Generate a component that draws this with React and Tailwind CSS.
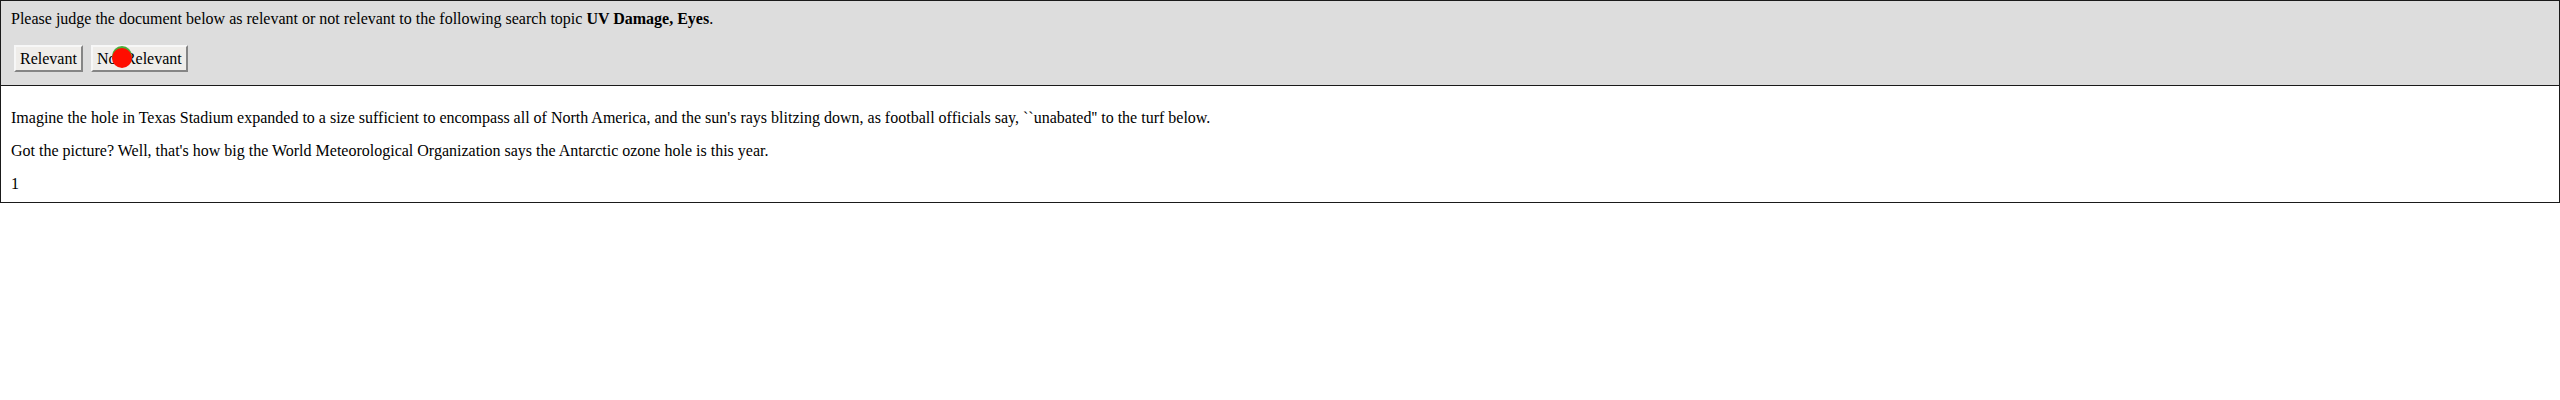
import React from "react";

export default function App() {
  return (
    <div className="w-[2560px] h-[400px] bg-white text-black" style={{ fontFamily: '"Liberation Serif", "Times New Roman", serif' }}>
      <div className="relative border border-[#1a1a1a] bg-[#dddddd] h-[86px] px-[10px] pt-[9px] text-[16px] leading-[18px]">
        <div>
          Please judge the document below as relevant or not relevant to the following search topic <b>UV Damage, Eyes</b>.
        </div>
        <div className="flex gap-[8px] mt-[17px] ml-[3px]">
          <button className="h-[27px] px-[4px] bg-[#efedea] border-2 border-t-[#f7f7f7] border-l-[#f7f7f7] border-r-[#858585] border-b-[#858585] text-[16px] leading-[18px]">
            Relevant
          </button>
          <button className="h-[27px] px-[4px] bg-[#efedea] border-2 border-t-[#f7f7f7] border-l-[#f7f7f7] border-r-[#858585] border-b-[#858585] text-[16px] leading-[18px]">
            Not Relevant
          </button>
        </div>
        <div className="absolute left-[111px] top-[45px] w-[20px] h-[20px] rounded-full bg-[#4caf3a]"></div>
        <div className="absolute left-[111px] top-[47px] w-[20px] h-[20px] rounded-full bg-[#ff0d00]"></div>
      </div>
      <div className="border border-t-0 border-[#1a1a1a] h-[117px] px-[10px] pt-[23px] text-[16px] leading-[18px]">
        <p className="mb-[15px]">
          Imagine the hole in Texas Stadium expanded to a size sufficient to encompass all of North America, and the sun's rays blitzing down, as football officials say, ``unabated'' to the turf below.
        </p>
        <p className="mb-[15px]">
          Got the picture? Well, that's how big the World Meteorological Organization says the Antarctic ozone hole is this year.
        </p>
        <p>1</p>
      </div>
    </div>
  );
}
